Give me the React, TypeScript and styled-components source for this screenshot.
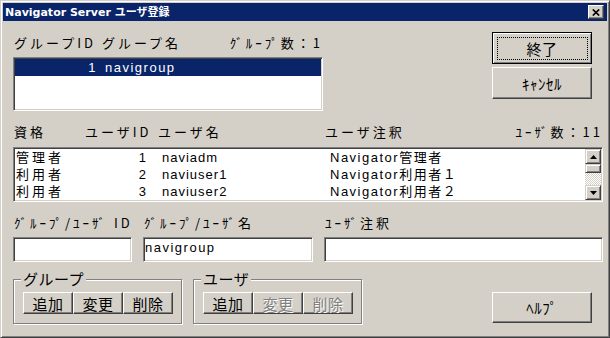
import React from "react";
import styled, { createGlobalStyle, css } from "styled-components";

const FACE = "#d4d0c8";
const SHADOW = "#808080";
const DARK = "#404040";
const NAVY = "#0a246a";
const JP = `"Noto Sans CJK JP", "Noto Sans", sans-serif`;
const ROW_FONT = `"Liberation Sans", "Noto Sans CJK JP", sans-serif`;

const GlobalStyle = createGlobalStyle`
  html, body {
    margin: 0;
    padding: 0;
    background: ${FACE};
  }
  body {
    font-family: ${JP};
    font-size: 13px;
    color: #000;
  }
`;

const raised = css`
  background: ${FACE};
  border: 1px solid;
  border-color: #fff ${DARK} ${DARK} #fff;
  box-shadow: inset -1px -1px ${SHADOW};
`;

const sunken = css`
  background: #fff;
  border: 1px solid;
  border-color: ${SHADOW} #fff #fff ${SHADOW};
  box-shadow: inset 1px 1px ${DARK}, inset -1px -1px ${FACE};
`;

const Window = styled.div`
  box-sizing: border-box;
  width: 610px;
  height: 338px;
  padding: 2px;
  overflow: hidden;
  background: ${FACE};
  border: 1px solid;
  border-color: ${FACE} ${DARK} ${DARK} ${FACE};
  box-shadow: inset 1px 1px #fff, inset -1px -1px ${SHADOW};
  display: flex;
  flex-direction: column;
  font: 13px ${JP};
`;

const TitleBar = styled.div`
  flex: none;
  height: 18px;
  display: flex;
  align-items: center;
  padding: 0 2px;
  background: ${NAVY};
`;

const Title = styled.div`
  flex: 1;
  padding-top: 2px;
  font: bold 11px/16px "DejaVu Sans", ${JP};
  color: #fff;
  white-space: nowrap;
`;

const CloseButton = styled.div`
  box-sizing: border-box;
  width: 16px;
  height: 14px;
  margin-right: 1px;
  ${raised};
  display: flex;
  align-items: center;
  justify-content: center;
`;

const Body = styled.div`
  flex: 1;
  padding: 11px 4px 0 10px;
  display: flex;
  flex-direction: column;
`;

const TopSection = styled.div`
  display: flex;
  height: 79px;
`;

const GroupColumn = styled.div`
  width: 310px;
  display: flex;
  flex-direction: column;
`;

const HeaderRow = styled.div`
  box-sizing: border-box;
  height: 25px;
  padding: 3px 0 0 1px;
  display: flex;
  justify-content: space-between;
  line-height: 15px;
  letter-spacing: 3px;
  white-space: nowrap;
`;

const ListBox = styled.div<{ $h: number }>`
  box-sizing: border-box;
  height: ${(p) => p.$h}px;
  padding: 1px;
  overflow: hidden;
  ${sunken};
  display: flex;
`;

const Rows = styled.div`
  flex: 1;
  display: flex;
  flex-direction: column;
  font: 13px/17px ${ROW_FONT};
`;

const GroupRow = styled.div<{ $selected?: boolean }>`
  flex: none;
  display: grid;
  grid-template-columns: 82px 1fr;
  height: 17px;
  letter-spacing: 1.5px;
  white-space: nowrap;
  background: ${(p) => (p.$selected ? NAVY : "transparent")};
  color: ${(p) => (p.$selected ? "#fff" : "#000")};
`;

const IdCell = styled.span`
  text-align: right;
`;

const NameCell = styled.span<{ $pad: number }>`
  padding-left: ${(p) => p.$pad}px;
`;

const ButtonColumn = styled.div`
  margin-left: auto;
  margin-right: 11px;
  display: flex;
  flex-direction: column;
  gap: 3px;
`;

const PushButton = styled.button<{ $w: number; $h: number; $default?: boolean }>`
  position: relative;
  box-sizing: border-box;
  flex: none;
  width: ${(p) => p.$w}px;
  height: ${(p) => p.$h}px;
  margin: 0;
  padding: 1px 0 0;
  font: 15px/16px ${JP};
  letter-spacing: 0.5px;
  color: #000;
  white-space: nowrap;
  ${raised};
  ${(p) =>
    p.$default &&
    css`
      border-color: #000;
      box-shadow: inset 1px 1px #fff, inset -1px -1px ${SHADOW};
      &::after {
        content: "";
        position: absolute;
        inset: 4px 3px 3px 4px;
        border: 1px dotted #000;
      }
    `}
  &:disabled {
    color: ${SHADOW};
    text-shadow: 1px 1px #fff;
  }
`;

const UsersHeader = styled.div`
  box-sizing: border-box;
  height: 36px;
  padding: 13px 0 0 1px;
  display: grid;
  grid-template-columns: 71px 73px 167px 1fr auto;
  line-height: 15px;
  letter-spacing: 3px;
  white-space: nowrap;
`;

const UserRow = styled.div`
  flex: none;
  display: grid;
  grid-template-columns: 104px 26px 184px 1fr;
  height: 17px;
  padding-left: 1px;
  white-space: nowrap;
`;

const QualCell = styled.span`
  letter-spacing: 3px;
`;

const UserName = styled(NameCell)`
  letter-spacing: 1px;
`;

const NoteCell = styled.span`
  letter-spacing: 1.5px;
`;

const ScrollBar = styled.div`
  flex: none;
  width: 16px;
  display: flex;
  flex-direction: column;
`;

const ScrollPart = styled.div<{ $h: number }>`
  box-sizing: border-box;
  flex: none;
  height: ${(p) => p.$h}px;
  background: ${FACE};
  border: 1px solid;
  border-color: ${FACE} ${DARK} ${DARK} ${FACE};
  box-shadow: inset 1px 1px #fff, inset -1px -1px ${SHADOW};
  display: flex;
  align-items: center;
  justify-content: center;
`;

const ScrollTrack = styled.div`
  flex: 1;
  background-image: repeating-conic-gradient(#fff 0 25%, ${FACE} 0 50%);
  background-size: 2px 2px;
`;

const FieldRow = styled.div`
  box-sizing: border-box;
  height: 60px;
  padding-top: 13px;
  display: grid;
  grid-template-columns: 119px 170px 1fr;
  column-gap: 11px;
`;

const Field = styled.div`
  display: flex;
  flex-direction: column;
`;

const FieldLabel = styled.span`
  padding-left: 1px;
  margin-bottom: 7px;
  line-height: 15px;
  letter-spacing: 3px;
  white-space: nowrap;
`;

const TextInput = styled.input`
  box-sizing: border-box;
  width: 100%;
  height: 25px;
  margin: 0;
  padding: 0 1px 5px;
  font: 13px/15px ${ROW_FONT};
  letter-spacing: 1.5px;
  color: #000;
  outline: none;
  ${sunken};
`;

const BottomRow = styled.div`
  display: flex;
  align-items: flex-start;
`;

const GroupBox = styled.div<{ $gap?: number }>`
  position: relative;
  box-sizing: border-box;
  width: 169px;
  height: 45px;
  margin-top: 17px;
  margin-left: ${(p) => p.$gap ?? 0}px;
  padding: 12px 8px 0 9px;
  border: 1px solid ${SHADOW};
  box-shadow: inset 1px 1px #fff, 1px 1px #fff;
  display: flex;
`;

const Legend = styled.span`
  position: absolute;
  top: -9px;
  left: 7px;
  padding: 0 2px;
  background: ${FACE};
  font-size: 15px;
  line-height: 16px;
  letter-spacing: 0.5px;
`;

const HelpButton = styled(PushButton)`
  margin: 30px 11px 0 auto;
`;

const Arrow = ({ up }: { up?: boolean }) => (
  <svg width="7" height="4" viewBox="0 0 7 4">
    <path d={up ? "M3.5 0L7 4H0Z" : "M0 0H7L3.5 4Z"} fill="#000" />
  </svg>
);

const users = [
  { qual: "管理者", id: 1, name: "naviadm", note: "Navigator管理者" },
  { qual: "利用者", id: 2, name: "naviuser1", note: "Navigator利用者１" },
  { qual: "利用者", id: 3, name: "naviuser2", note: "Navigator利用者２" },
];

export default function App() {
  return (
    <>
      <GlobalStyle />
      <Window>
        <TitleBar>
          <Title>Navigator Server ユーザ登録</Title>
          <CloseButton>
            <svg width="8" height="7" viewBox="0 0 8 7">
              <path d="M0.8 0.5L7.2 6.5M7.2 0.5L0.8 6.5" stroke="#000" strokeWidth="1.7" />
            </svg>
          </CloseButton>
        </TitleBar>
        <Body>
          <TopSection>
            <GroupColumn>
              <HeaderRow>
                <span>グループID グループ名</span>
                <span>ｸﾞﾙｰﾌﾟ数：1</span>
              </HeaderRow>
              <ListBox $h={54}>
                <Rows>
                  <GroupRow $selected>
                    <IdCell>1</IdCell>
                    <NameCell $pad={8}>navigroup</NameCell>
                  </GroupRow>
                </Rows>
              </ListBox>
            </GroupColumn>
            <ButtonColumn>
              <PushButton $w={100} $h={32} $default>
                終了
              </PushButton>
              <PushButton $w={100} $h={32}>
                ｷｬﾝｾﾙ
              </PushButton>
            </ButtonColumn>
          </TopSection>

          <UsersHeader>
            <span>資格</span>
            <span>ユーザID</span>
            <span>ユーザ名</span>
            <span>ユーザ注釈</span>
            <span>ﾕｰｻﾞ数：11</span>
          </UsersHeader>
          <ListBox $h={55}>
            <Rows>
              {users.map((u) => (
                <UserRow key={u.id}>
                  <QualCell>{u.qual}</QualCell>
                  <IdCell>{u.id}</IdCell>
                  <UserName $pad={16}>{u.name}</UserName>
                  <NoteCell>{u.note}</NoteCell>
                </UserRow>
              ))}
            </Rows>
            <ScrollBar>
              <ScrollPart $h={15}>
                <Arrow up />
              </ScrollPart>
              <ScrollPart $h={9} />
              <ScrollTrack />
              <ScrollPart $h={15}>
                <Arrow />
              </ScrollPart>
            </ScrollBar>
          </ListBox>

          <FieldRow>
            <Field>
              <FieldLabel>ｸﾞﾙｰﾌﾟ/ﾕｰｻﾞ ID</FieldLabel>
              <TextInput readOnly value="" />
            </Field>
            <Field>
              <FieldLabel>ｸﾞﾙｰﾌﾟ/ﾕｰｻﾞ名</FieldLabel>
              <TextInput readOnly value="navigroup" />
            </Field>
            <Field>
              <FieldLabel>ﾕｰｻﾞ注釈</FieldLabel>
              <TextInput readOnly value="" />
            </Field>
          </FieldRow>

          <BottomRow>
            <GroupBox>
              <Legend>グループ</Legend>
              <PushButton $w={50} $h={22}>追加</PushButton>
              <PushButton $w={50} $h={22}>変更</PushButton>
              <PushButton $w={50} $h={22}>削除</PushButton>
            </GroupBox>
            <GroupBox $gap={11}>
              <Legend>ユーザ</Legend>
              <PushButton $w={50} $h={22}>追加</PushButton>
              <PushButton $w={50} $h={22} disabled>
                変更
              </PushButton>
              <PushButton $w={50} $h={22} disabled>
                削除
              </PushButton>
            </GroupBox>
            <HelpButton $w={100} $h={31}>
              ﾍﾙﾌﾟ
            </HelpButton>
          </BottomRow>
        </Body>
      </Window>
    </>
  );
}
